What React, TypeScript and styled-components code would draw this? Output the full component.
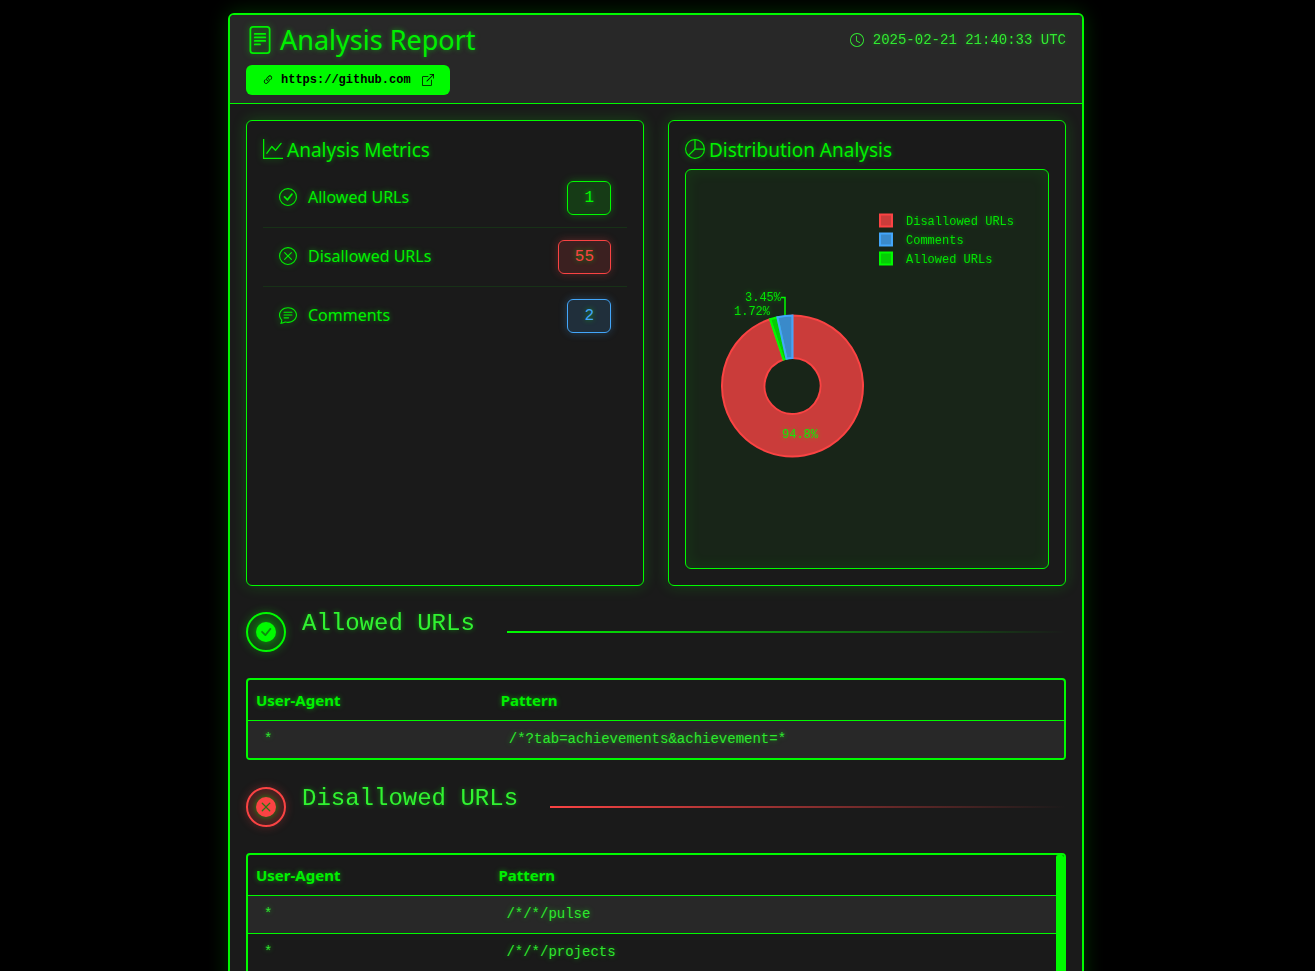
import React from "react";
import styled, { createGlobalStyle } from "styled-components";
import {
  BsBoxArrowUpRight,
  BsChatText,
  BsCheckCircle,
  BsCheckCircleFill,
  BsClock,
  BsFileText,
  BsGraphUp,
  BsLink45Deg,
  BsPieChart,
  BsXCircle,
  BsXCircleFill,
} from "react-icons/bs";

const sans = `"Noto Sans", "Open Sans", sans-serif`;
const mono = `"Liberation Mono", monospace`;

const tones = {
  green: { line: "#00fa00", rgb: "0, 250, 0" },
  red: { line: "#fa4343", rgb: "250, 67, 67" },
  blue: { line: "#43a6fa", rgb: "67, 166, 250" },
};
type Tone = keyof typeof tones;

const GlobalStyle = createGlobalStyle`
  * { box-sizing: border-box; }
  body {
    margin: 0;
    background: #000;
    color: #00f000;
    font-family: ${sans};
    font-size: 16px;
    line-height: 24px;
    text-shadow: 0 0 5px rgba(0, 255, 0, 0.5);
  }
  h1, h2, h3 { margin: 0; font-weight: 400; }
  svg { display: block; flex-shrink: 0; }
`;

const Page = styled.div`
  height: 100vh;
  overflow: hidden;
  padding: 13px 15px 0 12px;
`;

const Report = styled.main`
  max-width: 856px;
  margin: 0 auto;
  background: #1a1a1a;
  border: 2px solid #00fa00;
  border-radius: 6px;
  box-shadow: 0 0 20px rgba(0, 255, 0, 0.2);
  overflow: hidden;
`;

const ReportHeader = styled.header`
  display: flex;
  justify-content: space-between;
  align-items: flex-start;
  padding: 8px 16px;
  background: #282828;
  border-bottom: 1px solid #00fa00;
`;

const ReportTitle = styled.h1`
  display: flex;
  align-items: center;
  gap: 6px;
  font-size: 27px;
  line-height: 34px;
  margin-bottom: 8px;

  svg { filter: drop-shadow(0 0 3px rgba(0, 255, 0, 0.5)); }
`;

const SiteLink = styled.a`
  display: inline-flex;
  align-items: center;
  height: 30px;
  padding: 0 16px;
  border-radius: 6px;
  background: #00fa00;
  color: #000;
  font: bold 12px/18px ${mono};
  text-decoration: none;
  text-shadow: none;

  span { margin: 0 11px 0 7px; }
`;

const Timestamp = styled.time`
  display: flex;
  align-items: center;
  gap: 9px;
  height: 34px;
  color: #33ff33;
  font: 14px/20px ${mono};
  opacity: 0.9;
`;

const Body = styled.div`
  padding: 16px;
`;

const Cards = styled.div`
  display: grid;
  grid-template-columns: 1fr 1fr;
  gap: 24px;
  margin-bottom: 24px;
`;

const Card = styled.section`
  padding: 16px;
  border: 1px solid #00fa00;
  border-radius: 6px;
  box-shadow: 0 0 15px rgba(0, 255, 0, 0.2);
`;

const CardTitle = styled.h2`
  display: flex;
  align-items: center;
  gap: 4px;
  font-size: 19px;
  line-height: 24px;
  margin-bottom: 8px;

  span { padding-top: 2px; line-height: 22px; }
  svg { filter: drop-shadow(0 0 3px rgba(0, 255, 0, 0.5)); }
`;

const Metric = styled.div`
  display: flex;
  align-items: center;
  justify-content: space-between;
  padding: 12px 16px;

  & + & { border-top: 1px solid rgba(0, 255, 0, 0.1); }
`;

const MetricName = styled.span`
  display: flex;
  align-items: center;
  gap: 11px;
  padding-bottom: 2px;

  svg { filter: drop-shadow(0 0 3px rgba(0, 255, 0, 0.5)); }
`;

const Badge = styled.span<{ $tone: Tone }>`
  padding: 4px 16px;
  border: 1px solid ${(p) => tones[p.$tone].line};
  border-radius: 6px;
  background: rgba(${(p) => tones[p.$tone].rgb}, 0.15);
  box-shadow: 0 0 8px rgba(${(p) => tones[p.$tone].rgb}, 0.3);
  color: ${(p) => tones[p.$tone].line};
  font: 16px/24px ${mono};
`;

const Chart = styled.div`
  height: 400px;
  border: 1px solid #00fa00;
  border-radius: 6px;
  background: rgba(0, 255, 0, 0.05);
  box-shadow: inset 0 0 15px rgba(0, 255, 0, 0.1);

  text {
    fill: #00fa00;
    font: 12px ${mono};
    opacity: 0.9;
  }
`;

const Section = styled.section`
  margin-bottom: 25px;
`;

const SectionHeader = styled.div`
  display: flex;
  align-items: center;
  min-height: 44px;
  margin-bottom: 24px;
`;

const SectionIcon = styled.span<{ $tone: Tone }>`
  display: grid;
  place-items: center;
  width: 40px;
  height: 40px;
  margin-right: 16px;
  border: 2px solid ${(p) => tones[p.$tone].line};
  border-radius: 50%;
  background: rgba(${(p) => tones[p.$tone].rgb}, 0.2);
  box-shadow: 0 0 10px rgba(${(p) => tones[p.$tone].rgb}, 0.3);
  color: ${(p) => tones[p.$tone].line};

  svg { filter: drop-shadow(0 0 3px rgba(0, 255, 0, 0.5)); }
`;

const SectionTitle = styled.h3`
  margin: 0 32px 16px 0;
  color: #33ff33;
  font: 24px/28px ${mono};
  opacity: 0.95;
`;

const Rule = styled.span<{ $tone: Tone }>`
  flex: 1;
  height: 2px;
  background: linear-gradient(90deg, ${(p) => tones[p.$tone].line}, transparent);
`;

const TableFrame = styled.div<{ $scrolls?: boolean }>`
  display: flex;
  min-height: ${(p) => (p.$scrolls ? "400px" : "0")};
  border: 2px solid #00fa00;
  border-radius: 4px;
  overflow: hidden;
`;

const Scroller = styled.div`
  flex: 1;
`;

const ScrollThumb = styled.div`
  width: 8px;
  height: 180px;
  border-radius: 2px;
  background: #00fa00;
`;

const Table = styled.table`
  width: 100%;
  table-layout: fixed;
  border-spacing: 0;
  text-align: left;

  th {
    height: 41px;
    padding: 0 8px;
    border-bottom: 1px solid #00fa00;
    font-size: 15px;
    font-weight: 700;
  }
  th:first-child { width: 30%; }
  td {
    height: 38px;
    padding: 0 16px 2px;
    border-bottom: 1px solid #00fa00;
    color: #2ee82e;
    font: 14px/20px ${mono};
  }
  tbody tr:nth-child(odd) { background: #282828; }
  tbody tr:last-child td { height: 37px; border-bottom: 0; }
`;

const metrics: { name: string; value: number; tone: Tone; icon: React.ReactNode }[] = [
  { name: "Allowed URLs", value: 1, tone: "green", icon: <BsCheckCircle size={18} /> },
  { name: "Disallowed URLs", value: 55, tone: "red", icon: <BsXCircle size={18} /> },
  { name: "Comments", value: 2, tone: "blue", icon: <BsChatText size={18} /> },
];

const slices: { name: string; value: number; tone: Tone }[] = [
  { name: "Disallowed URLs", value: 55, tone: "red" },
  { name: "Allowed URLs", value: 1, tone: "green" },
  { name: "Comments", value: 2, tone: "blue" },
];

const legend: { name: string; tone: Tone }[] = [
  { name: "Disallowed URLs", tone: "red" },
  { name: "Comments", tone: "blue" },
  { name: "Allowed URLs", tone: "green" },
];

const allowed = ["/*?tab=achievements&achievement=*"];
const disallowed = ["/*/*/pulse", "/*/*/projects"];

const CX = 106.5;
const CY = 216;

function at(fraction: number, radius: number) {
  const angle = fraction * 2 * Math.PI;
  return `${(CX + radius * Math.sin(angle)).toFixed(2)} ${(CY - radius * Math.cos(angle)).toFixed(2)}`;
}

function slicePath(from: number, to: number) {
  const large = to - from > 0.5 ? 1 : 0;
  return `M${at(from, 70.5)}A70.5 70.5 0 ${large} 1 ${at(to, 70.5)}L${at(to, 28)}A28 28 0 ${large} 0 ${at(from, 28)}Z`;
}

function Donut() {
  const total = slices.reduce((sum, s) => sum + s.value, 0);
  let start = 0;
  return (
    <svg width="100%" height="398" viewBox="0 0 362 398" preserveAspectRatio="xMinYMin meet" role="img" aria-label="URL distribution">
      {slices.map((s) => {
        const from = start;
        start += s.value / total;
        return (
          <path
            key={s.name}
            d={slicePath(from, start)}
            fill={tones[s.tone].line}
            fillOpacity={0.79}
            stroke={tones[s.tone].line}
            strokeWidth={2}
          />
        );
      })}
      <path d="M95 127.500H99V145" fill="none" stroke="#00fa00" strokeWidth={1.5} />
      <text x={59} y={131}>3.45%</text>
      <text x={48} y={145}>1.72%</text>
      <text x={96} y={268}>94.8%</text>
      {legend.map((item, i) => (
        <g key={item.name}>
          <rect
            x={194}
            y={44.5 + i * 19}
            width={12}
            height={12}
            fill={tones[item.tone].line}
            fillOpacity={0.79}
            stroke={tones[item.tone].line}
            strokeWidth={2}
          />
          <text x={220} y={55 + i * 19}>{item.name}</text>
        </g>
      ))}
    </svg>
  );
}

function UrlTable({ patterns, scrolls }: { patterns: string[]; scrolls?: boolean }) {
  return (
    <TableFrame $scrolls={scrolls}>
      <Scroller>
        <Table>
          <thead>
            <tr>
              <th>User-Agent</th>
              <th>Pattern</th>
            </tr>
          </thead>
          <tbody>
            {patterns.map((pattern) => (
              <tr key={pattern}>
                <td>*</td>
                <td>{pattern}</td>
              </tr>
            ))}
          </tbody>
        </Table>
      </Scroller>
      {scrolls && <ScrollThumb />}
    </TableFrame>
  );
}

export default function App() {
  return (
    <Page>
      <GlobalStyle />
      <Report>
        <ReportHeader>
          <div>
            <ReportTitle>
              <BsFileText size={28} />
              Analysis Report
            </ReportTitle>
            <SiteLink href="https://github.com">
              <BsLink45Deg size={12} />
              <span>https://github.com</span>
              <BsBoxArrowUpRight size={12} />
            </SiteLink>
          </div>
          <Timestamp dateTime="2025-02-21T21:40:33Z">
            <BsClock size={14} />
            2025-02-21 21:40:33 UTC
          </Timestamp>
        </ReportHeader>
        <Body>
          <Cards>
            <Card>
              <CardTitle>
                <BsGraphUp size={20} />
                <span>Analysis Metrics</span>
              </CardTitle>
              {metrics.map((m) => (
                <Metric key={m.name}>
                  <MetricName>
                    {m.icon}
                    {m.name}
                  </MetricName>
                  <Badge $tone={m.tone}>{m.value}</Badge>
                </Metric>
              ))}
            </Card>
            <Card>
              <CardTitle>
                <BsPieChart size={20} />
                <span>Distribution Analysis</span>
              </CardTitle>
              <Chart>
                <Donut />
              </Chart>
            </Card>
          </Cards>
          <Section>
            <SectionHeader>
              <SectionIcon $tone="green">
                <BsCheckCircleFill size={20} />
              </SectionIcon>
              <SectionTitle>Allowed URLs</SectionTitle>
              <Rule $tone="green" />
            </SectionHeader>
            <UrlTable patterns={allowed} />
          </Section>
          <Section>
            <SectionHeader>
              <SectionIcon $tone="red">
                <BsXCircleFill size={20} />
              </SectionIcon>
              <SectionTitle>Disallowed URLs</SectionTitle>
              <Rule $tone="red" />
            </SectionHeader>
            <UrlTable patterns={disallowed} scrolls />
          </Section>
        </Body>
      </Report>
    </Page>
  );
}
